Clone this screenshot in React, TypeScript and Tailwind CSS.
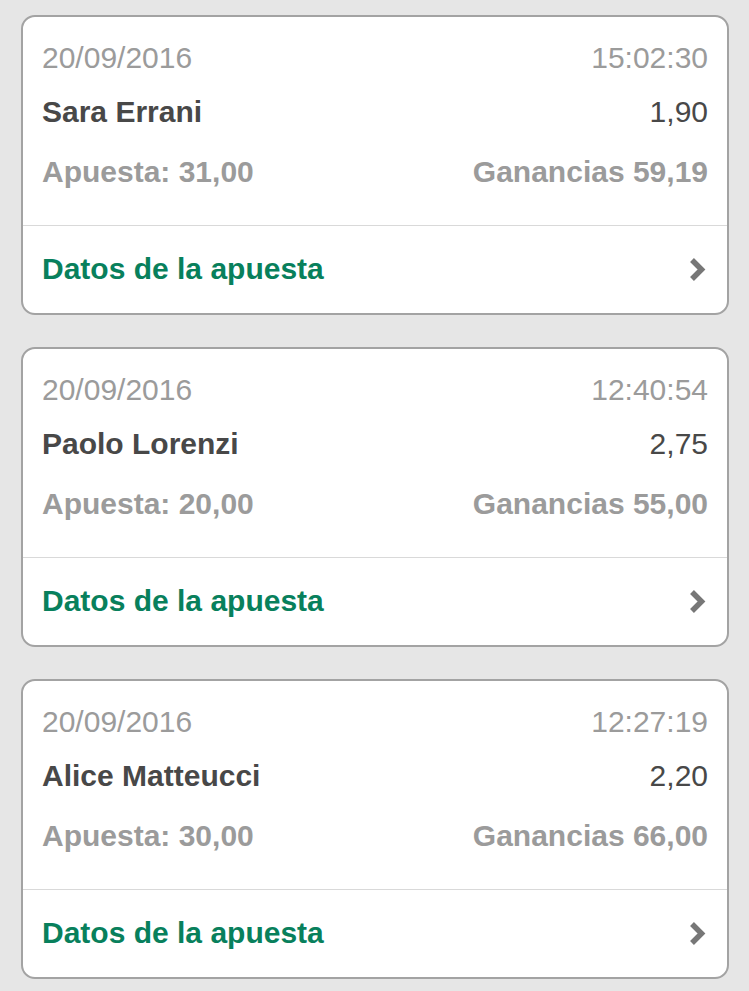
const BETS = [
  { date: "20/09/2016", time: "15:02:30", player: "Sara Errani", odds: "1,90", stake: "31,00", winnings: "59,19" },
  { date: "20/09/2016", time: "12:40:54", player: "Paolo Lorenzi", odds: "2,75", stake: "20,00", winnings: "55,00" },
  { date: "20/09/2016", time: "12:27:19", player: "Alice Matteucci", odds: "2,20", stake: "30,00", winnings: "66,00" },
];

const Chevron = () => (
  <svg width="18" height="27" viewBox="0 0 18 27" className="blur-[0.5px]">
    <path d="M4 4 L13.5 13.5 L4 23" fill="none" stroke="#777777" strokeWidth="5.5" strokeLinejoin="miter" strokeLinecap="butt" />
  </svg>
);

const BetCard = ({ bet }: { bet: (typeof BETS)[number] }) => (
  <div className="h-[300px] overflow-hidden rounded-[14px] border-2 border-[#a3a3a3] bg-white">
    <div className="px-[19px] pb-[35px] pt-[23px]">
      <div className="flex justify-between leading-[36px] text-[#9b9b9b]">
        <span>{bet.date}</span>
        <span>{bet.time}</span>
      </div>
      <div className="mt-[18px] flex justify-between leading-[36px] text-[#484848]">
        <span className="font-bold">{bet.player}</span>
        <span>{bet.odds}</span>
      </div>
      <div className="mt-[24px] flex justify-between font-bold leading-[36px] text-[#9b9b9b]">
        <span>Apuesta: {bet.stake}</span>
        <span>Ganancias {bet.winnings}</span>
      </div>
    </div>
    <div className="flex h-[87px] items-center justify-between border-t border-[#d9d9d9] pl-[19px] pr-[21px]">
      <span className="font-bold leading-[36px] text-[#08805c]">Datos de la apuesta</span>
      <Chevron />
    </div>
  </div>
);

export default function App() {
  return (
    <div
      className="min-h-[991px] bg-[#e6e6e6] pl-[21px] pr-[20px] pt-[15px] text-[30px]"
      style={{ fontFamily: '"Liberation Sans", Arial, sans-serif' }}
    >
      <div className="flex flex-col gap-[32px]">
        {BETS.map((bet) => (
          <BetCard key={bet.time} bet={bet} />
        ))}
      </div>
    </div>
  );
}
